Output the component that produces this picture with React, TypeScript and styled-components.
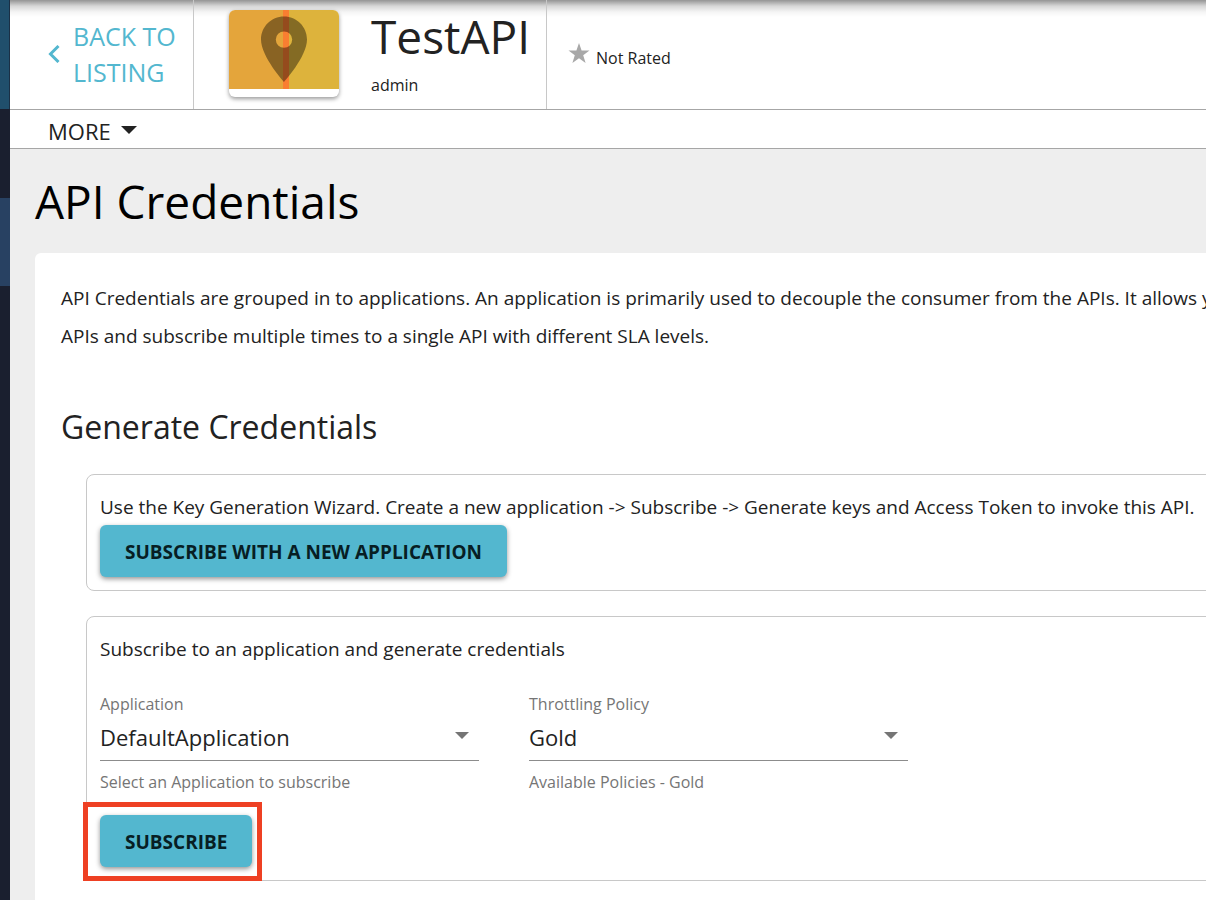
import React from "react";
import styled, { createGlobalStyle } from "styled-components";

const GlobalStyle = createGlobalStyle`
  *, *::before, *::after { box-sizing: border-box; }
  body {
    margin: 0;
    background: #eeeeee;
    color: #222222;
    font-family: "Open Sans", "Noto Sans", sans-serif;
    font-size: 19px;
  }
  h1, h2, p { margin: 0; font-weight: 400; }
`;

const Page = styled.div`
  display: flex;
  min-height: 100vh;
`;

const Rail = styled.nav`
  display: flex;
  flex-direction: column;
  flex: none;
  width: 10px;
  background: #1a1f2f;
`;

const RailBlock = styled.div<{ $height: number; $color?: string }>`
  height: ${(p) => p.$height}px;
  background: ${(p) => p.$color || "transparent"};
  border-right: ${(p) => (p.$height > 100 ? "1px solid #1a3046" : "0")};
`;

const Main = styled.main`
  display: flex;
  flex-direction: column;
  flex: 1;
  min-width: 0;
  overflow: hidden;
`;

const Header = styled.header`
  display: flex;
  height: 110px;
  border-bottom: 1px solid #a6a6a6;
  background: linear-gradient(rgba(0, 0, 0, 0.42), rgba(0, 0, 0, 0.16) 6px, rgba(0, 0, 0, 0.04) 12px, transparent 17px) #ffffff;
`;

const BackLink = styled.a`
  display: flex;
  align-items: center;
  gap: 13px;
  width: 184px;
  padding: 0 0 2px 38px;
  border-right: 1px solid #c8c8c8;
  color: #53b7cf;
  font-size: 25px;
  line-height: 36px;
  text-decoration: none;
`;

const ApiSummary = styled.div`
  display: flex;
  align-items: flex-start;
  gap: 32px;
  width: 353px;
  padding: 10px 0 0 35px;
  border-right: 1px solid #c8c8c8;
`;

const Thumbnail = styled.div`
  flex: none;
  width: 110px;
  height: 87px;
  overflow: hidden;
  border-radius: 6px;
  background: #ffffff;
  box-shadow: 0 2px 4px rgba(0, 0, 0, 0.4);

  svg { display: block; }
`;

const ApiName = styled.p`
  font-size: 46px;
  line-height: 52px;
`;

const Provider = styled.p`
  font-size: 16px;
  line-height: 46px;
`;

const Rating = styled.div`
  display: flex;
  align-items: center;
  gap: 6px;
  padding: 6px 0 0 21px;
  font-size: 16px;

  svg { margin-bottom: 10px; }
`;

const MenuBar = styled.div`
  display: flex;
  height: 39px;
  padding-left: 38px;
  border-bottom: 1px solid #a6a6a6;
  background: #ffffff;
`;

const MoreButton = styled.button`
  display: flex;
  align-items: center;
  gap: 10px;
  padding: 4px 0 0;
  border: 0;
  background: none;
  color: #222222;
  font: 22px "Open Sans", sans-serif;
  cursor: pointer;

  svg { margin-bottom: 3px; }
`;

const PageTitle = styled.h1`
  padding: 20px 25px;
  color: #000000;
  font-size: 46px;
  line-height: 64px;
`;

const Card = styled.section`
  flex: 1;
  margin-left: 25px;
  padding: 26px 0 18px 26px;
  border-top-left-radius: 6px;
  background: #ffffff;
`;

const Intro = styled.p`
  line-height: 38px;
  white-space: nowrap;
`;

const SectionTitle = styled.h2`
  padding: 48px 0 23px;
  font-size: 32px;
  line-height: 48px;
`;

const Panel = styled.div`
  margin: 0 -8px 25px 25px;
  padding: 16px 13px 13px;
  border: 1px solid #c8c8c8;
  border-radius: 8px;

  &:last-child { margin-bottom: 0; }
`;

const PanelText = styled.p`
  margin-bottom: 2px;
  line-height: 32px;
  white-space: nowrap;
`;

const ActionButton = styled.button`
  display: block;
  height: 52px;
  padding: 2px 25px 0;
  border: 0;
  border-radius: 6px;
  background: #53b7cf;
  color: #071e24;
  font: 700 19px "Open Sans", sans-serif;
  box-shadow: 0 2px 5px rgba(0, 0, 0, 0.42);
  cursor: pointer;
`;

const Fields = styled.div`
  display: flex;
  gap: 50px;
  padding: 25px 0 21px;
`;

const Field = styled.div`
  display: flex;
  flex-direction: column;
  width: 379px;
  color: #757575;
  font-size: 16px;
  line-height: 24px;
`;

const SelectWrap = styled.div`
  display: grid;
  align-items: center;
  margin-bottom: 9px;
  border-bottom: 1px solid #8c8c8c;

  > * { grid-area: 1 / 1; }
  svg { justify-self: end; margin: 0 10px 5px 0; pointer-events: none; }
`;

const Select = styled.select`
  appearance: none;
  width: 100%;
  height: 44px;
  padding: 0 0 3px;
  border: 0;
  background: none;
  color: #222222;
  font: 22px "Open Sans", sans-serif;
`;

const Highlight = styled.div`
  position: relative;
  width: fit-content;

  &::after {
    content: "";
    position: absolute;
    inset: -13px -10px -14px -17px;
    border: 5px solid #ee4023;
    pointer-events: none;
  }
`;

const Caret = ({ width, color }: { width: number; color: string }) => (
  <svg width={width} height={width / 2} viewBox="0 0 14 7" aria-hidden="true">
    <path d="M0 0h14L7 7z" fill={color} />
  </svg>
);

const ApiPicture = () => (
  <svg width="110" height="79" viewBox="0 0 110 79" aria-hidden="true">
    <path d="M0 0h54v79H0z" fill="#e4a53b" />
    <path d="M54 0h6v79h-6z" fill="#f97e31" />
    <path d="M60 0h50v79H60z" fill="#ddb33c" />
    <path
      fillRule="evenodd"
      fill="#000000"
      fillOpacity="0.4"
      d="M55 6.500C42.200 6.500 32 16.800 32 29.500C32 46.500 55 72 55 72S78 46.500 78 29.500C78 16.800 67.800 6.500 55 6.500ZM55 37.800a8.200 8.200 0 1 1 0-16.400a8.200 8.200 0 0 1 0 16.400Z"
    />
  </svg>
);

interface SelectFieldProps {
  id: string;
  label: string;
  value: string;
  help: string;
}

const SelectField = ({ id, label, value, help }: SelectFieldProps) => (
  <Field>
    <label htmlFor={id}>{label}</label>
    <SelectWrap>
      <Select id={id} defaultValue={value} aria-describedby={`${id}-help`}>
        <option>{value}</option>
      </Select>
      <Caret width={14} color="#757575" />
    </SelectWrap>
    <span id={`${id}-help`}>{help}</span>
  </Field>
);

export default function App() {
  return (
    <Page>
      <GlobalStyle />
      <Rail>
        <RailBlock $height={109} $color="#204f6c" />
        <RailBlock $height={89} />
        <RailBlock $height={88} $color="#284162" />
      </Rail>
      <Main>
        <Header>
          <BackLink href="#listing">
            <svg width="12" height="18" viewBox="0 0 12 18" aria-hidden="true">
              <path d="M10.500 1L2.500 9l8 8" fill="none" stroke="currentColor" strokeWidth="3" />
            </svg>
            <span>
              BACK TO
              <br />
              LISTING
            </span>
          </BackLink>
          <ApiSummary>
            <Thumbnail>
              <ApiPicture />
            </Thumbnail>
            <div>
              <ApiName>TestAPI</ApiName>
              <Provider>admin</Provider>
            </div>
          </ApiSummary>
          <Rating>
            <svg width="22" height="20" viewBox="0 0 22 20" aria-hidden="true">
              <path d="M11 0l2.600 7.500H21.500l-6.300 4.700L17.600 20 11 15.300 4.400 20l2.400-7.800L.5 7.500h7.900z" fill="#a8a8a8" />
            </svg>
            Not Rated
          </Rating>
        </Header>
        <MenuBar>
          <MoreButton type="button">
            MORE
            <Caret width={16} color="#222222" />
          </MoreButton>
        </MenuBar>
        <PageTitle>API Credentials</PageTitle>
        <Card>
          <Intro>
            API Credentials are grouped in to applications. An application is primarily used to decouple the consumer from the APIs. It allows you
            <br />
            APIs and subscribe multiple times to a single API with different SLA levels.
          </Intro>
          <SectionTitle>Generate Credentials</SectionTitle>
          <Panel>
            <PanelText>
              Use the Key Generation Wizard. Create a new application -&gt; Subscribe -&gt; Generate keys and Access Token to invoke this API.
            </PanelText>
            <ActionButton type="button">SUBSCRIBE WITH A NEW APPLICATION</ActionButton>
          </Panel>
          <Panel>
            <PanelText>Subscribe to an application and generate credentials</PanelText>
            <Fields>
              <SelectField
                id="application"
                label="Application"
                value="DefaultApplication"
                help="Select an Application to subscribe"
              />
              <SelectField id="policy" label="Throttling Policy" value="Gold" help="Available Policies - Gold" />
            </Fields>
            <Highlight>
              <ActionButton type="button">SUBSCRIBE</ActionButton>
            </Highlight>
          </Panel>
        </Card>
      </Main>
    </Page>
  );
}
